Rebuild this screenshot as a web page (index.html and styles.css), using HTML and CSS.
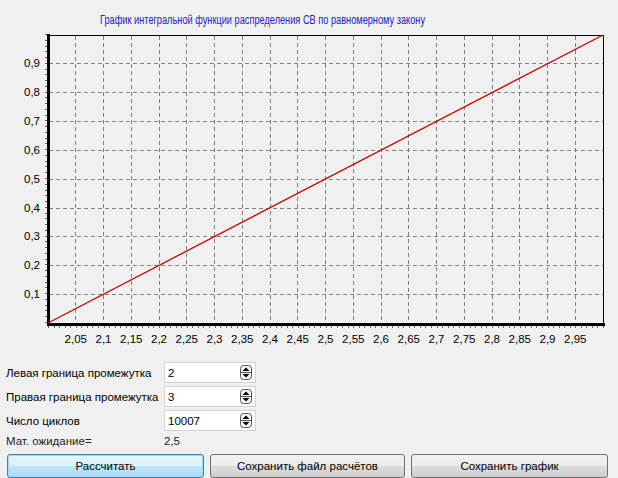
FILE: index.html
```html
<!DOCTYPE html>
<html lang="ru">
<head>
<meta charset="utf-8">
<title>График</title>
<link rel="stylesheet" href="styles.css">
</head>
<body>
<div class="window">
  <svg class="chart" width="618" height="356" viewBox="0 0 618 356">
    <text class="title" x="100" y="24" textLength="325" lengthAdjust="spacingAndGlyphs">График интегральной функции распределения СВ по равномерному закону</text>
    <g class="grid">
      <line x1="75.75" y1="36" x2="75.75" y2="323"/>
      <line x1="103.5" y1="36" x2="103.5" y2="323"/>
      <line x1="131.25" y1="36" x2="131.25" y2="323"/>
      <line x1="159" y1="36" x2="159" y2="323"/>
      <line x1="186.75" y1="36" x2="186.75" y2="323"/>
      <line x1="214.5" y1="36" x2="214.5" y2="323"/>
      <line x1="242.25" y1="36" x2="242.25" y2="323"/>
      <line x1="270" y1="36" x2="270" y2="323"/>
      <line x1="297.75" y1="36" x2="297.75" y2="323"/>
      <line x1="325.5" y1="36" x2="325.5" y2="323"/>
      <line x1="353.25" y1="36" x2="353.25" y2="323"/>
      <line x1="381" y1="36" x2="381" y2="323"/>
      <line x1="408.75" y1="36" x2="408.75" y2="323"/>
      <line x1="436.5" y1="36" x2="436.5" y2="323"/>
      <line x1="464.25" y1="36" x2="464.25" y2="323"/>
      <line x1="492" y1="36" x2="492" y2="323"/>
      <line x1="519.75" y1="36" x2="519.75" y2="323"/>
      <line x1="547.5" y1="36" x2="547.5" y2="323"/>
      <line x1="575.25" y1="36" x2="575.25" y2="323"/>
      <line x1="49" y1="294.5" x2="603" y2="294.5"/>
      <line x1="49" y1="265.5" x2="603" y2="265.5"/>
      <line x1="49" y1="236.5" x2="603" y2="236.5"/>
      <line x1="49" y1="208.5" x2="603" y2="208.5"/>
      <line x1="49" y1="179.5" x2="603" y2="179.5"/>
      <line x1="49" y1="150.5" x2="603" y2="150.5"/>
      <line x1="49" y1="121.5" x2="603" y2="121.5"/>
      <line x1="49" y1="92.5" x2="603" y2="92.5"/>
      <line x1="49" y1="63.5" x2="603" y2="63.5"/>
    </g>
    <line class="ticks" x1="48" y1="327" x2="604" y2="327" stroke-dasharray="1 4.55"/>
    <line class="ticks" x1="45.5" y1="323" x2="45.5" y2="34" stroke-dasharray="1 4.76"/>
    <rect class="frame" x="48.5" y="35.5" width="555" height="288"/>
    <line class="axis" x1="48" y1="34" x2="48" y2="325"/>
    <line class="axis" x1="47" y1="324" x2="605" y2="324"/>
    <line class="plot" x1="48" y1="323" x2="603" y2="35"/>
    <g class="ylabels" text-anchor="end">
      <text x="40" y="298">0,1</text>
      <text x="40" y="269">0,2</text>
      <text x="40" y="240">0,3</text>
      <text x="40" y="212">0,4</text>
      <text x="40" y="183">0,5</text>
      <text x="40" y="154">0,6</text>
      <text x="40" y="125">0,7</text>
      <text x="40" y="96">0,8</text>
      <text x="40" y="67">0,9</text>
    </g>
    <g class="xlabels" text-anchor="middle">
      <text x="75.75" y="343">2,05</text>
      <text x="103.5" y="343">2,1</text>
      <text x="131.25" y="343">2,15</text>
      <text x="159" y="343">2,2</text>
      <text x="186.75" y="343">2,25</text>
      <text x="214.5" y="343">2,3</text>
      <text x="242.25" y="343">2,35</text>
      <text x="270" y="343">2,4</text>
      <text x="297.75" y="343">2,45</text>
      <text x="325.5" y="343">2,5</text>
      <text x="353.25" y="343">2,55</text>
      <text x="381" y="343">2,6</text>
      <text x="408.75" y="343">2,65</text>
      <text x="436.5" y="343">2,7</text>
      <text x="464.25" y="343">2,75</text>
      <text x="492" y="343">2,8</text>
      <text x="519.75" y="343">2,85</text>
      <text x="547.5" y="343">2,9</text>
      <text x="575.25" y="343">2,95</text>
    </g>
  </svg>

  <div class="form">
    <label class="lbl">Левая граница промежутка</label>
    <div class="spin"><span class="val">2</span><svg class="arrows" width="12" height="15" viewBox="0 0 12 15"><rect x="0.5" y="0.5" width="11" height="14" rx="3" class="arr-box"/><line x1="1" y1="7.5" x2="11" y2="7.5" class="arr-sep"/><path d="M2.5 6 L6 2.5 L9.5 6 Z" class="arr"/><path d="M2.5 9 L6 12.5 L9.5 9 Z" class="arr"/></svg></div>
    <label class="lbl">Правая граница промежутка</label>
    <div class="spin"><span class="val">3</span><svg class="arrows" width="12" height="15" viewBox="0 0 12 15"><rect x="0.5" y="0.5" width="11" height="14" rx="3" class="arr-box"/><line x1="1" y1="7.5" x2="11" y2="7.5" class="arr-sep"/><path d="M2.5 6 L6 2.5 L9.5 6 Z" class="arr"/><path d="M2.5 9 L6 12.5 L9.5 9 Z" class="arr"/></svg></div>
    <label class="lbl">Число циклов</label>
    <div class="spin"><span class="val">10007</span><svg class="arrows" width="12" height="15" viewBox="0 0 12 15"><rect x="0.5" y="0.5" width="11" height="14" rx="3" class="arr-box"/><line x1="1" y1="7.5" x2="11" y2="7.5" class="arr-sep"/><path d="M2.5 6 L6 2.5 L9.5 6 Z" class="arr"/><path d="M2.5 9 L6 12.5 L9.5 9 Z" class="arr"/></svg></div>
    <span class="lbl result">Мат. ожидание=</span>
    <span class="result-val">2,5</span>
  </div>

  <div class="buttons">
    <button class="btn focused">Рассчитать</button>
    <button class="btn">Сохранить файл расчётов</button>
    <button class="btn">Сохранить график</button>
  </div>
</div>
</body>
</html>
```
FILE: styles.css
```css
html, body {
  margin: 0;
  padding: 0;
  background: #f0f0f0;
}
.window {
  width: 618px;
  height: 478px;
  background: #f0f0f0;
  font-family: "Liberation Sans", Arial, sans-serif;
  font-size: 11px;
  color: #000;
  display: flex;
  flex-direction: column;
  overflow: hidden;
}
.chart {
  display: block;
}
.title {
  font-family: "Liberation Sans", Arial, sans-serif;
  font-size: 12px;
  fill: #2222cc;
}
.grid line {
  stroke: #808080;
  stroke-width: 1;
  stroke-dasharray: 4 3;
  shape-rendering: crispEdges;
}
.ticks {
  stroke: #666;
  stroke-width: 2;
  shape-rendering: crispEdges;
}
.frame {
  fill: none;
  stroke: #000;
  stroke-width: 1;
  shape-rendering: crispEdges;
}
.axis {
  stroke: #000;
  stroke-width: 3;
  shape-rendering: crispEdges;
}
.plot {
  stroke: #cc0000;
  stroke-width: 1.3;
}
.ylabels text, .xlabels text {
  font-family: "Liberation Sans", Arial, sans-serif;
  font-size: 11.5px;
  fill: #000;
}
.form {
  display: grid;
  grid-template-columns: 158px 92px;
  grid-auto-rows: 21px;
  row-gap: 3px;
  padding: 6px 0 0 6px;
}
.lbl {
  display: flex;
  align-items: center;
  font-size: 11.5px;
  white-space: nowrap;
}
.spin {
  box-sizing: border-box;
  background: #fff;
  border: 1px solid #d4d4d4;
  display: flex;
  align-items: center;
  justify-content: space-between;
  padding: 0 3px 0 3px;
}
.val {
  font-size: 11.5px;
}
.arrows {
  display: block;
}
.arr-box {
  fill: #f4f4f4;
  stroke: #555;
  stroke-width: 1;
}
.arr-sep {
  stroke: #555;
  stroke-width: 1;
}
.arr {
  fill: #000;
}
.result, .result-val {
  font-size: 11.5px;
  height: 14px;
  display: flex;
  align-items: center;
  color: #222;
}
.buttons {
  display: grid;
  grid-template-columns: 197px 195px 197px;
  column-gap: 6px;
  padding: 0 0 0 7px;
  margin-top: -1px;
}
.btn {
  height: 24px;
  box-sizing: border-box;
  border: 1px solid #707070;
  border-radius: 3px;
  background: linear-gradient(#f2f2f2 0%, #ebebeb 50%, #dddddd 51%, #cfcfcf 100%);
  font-family: "Liberation Sans", Arial, sans-serif;
  font-size: 11.5px;
  color: #000;
  padding: 0;
}
.btn.focused {
  border-color: #3c7fb1;
  box-shadow: inset 0 0 0 1px #a6d9f4;
  background: linear-gradient(#eaf6fd 0%, #d9f0fc 50%, #bee6fd 51%, #a7d9f5 100%);
}
```
